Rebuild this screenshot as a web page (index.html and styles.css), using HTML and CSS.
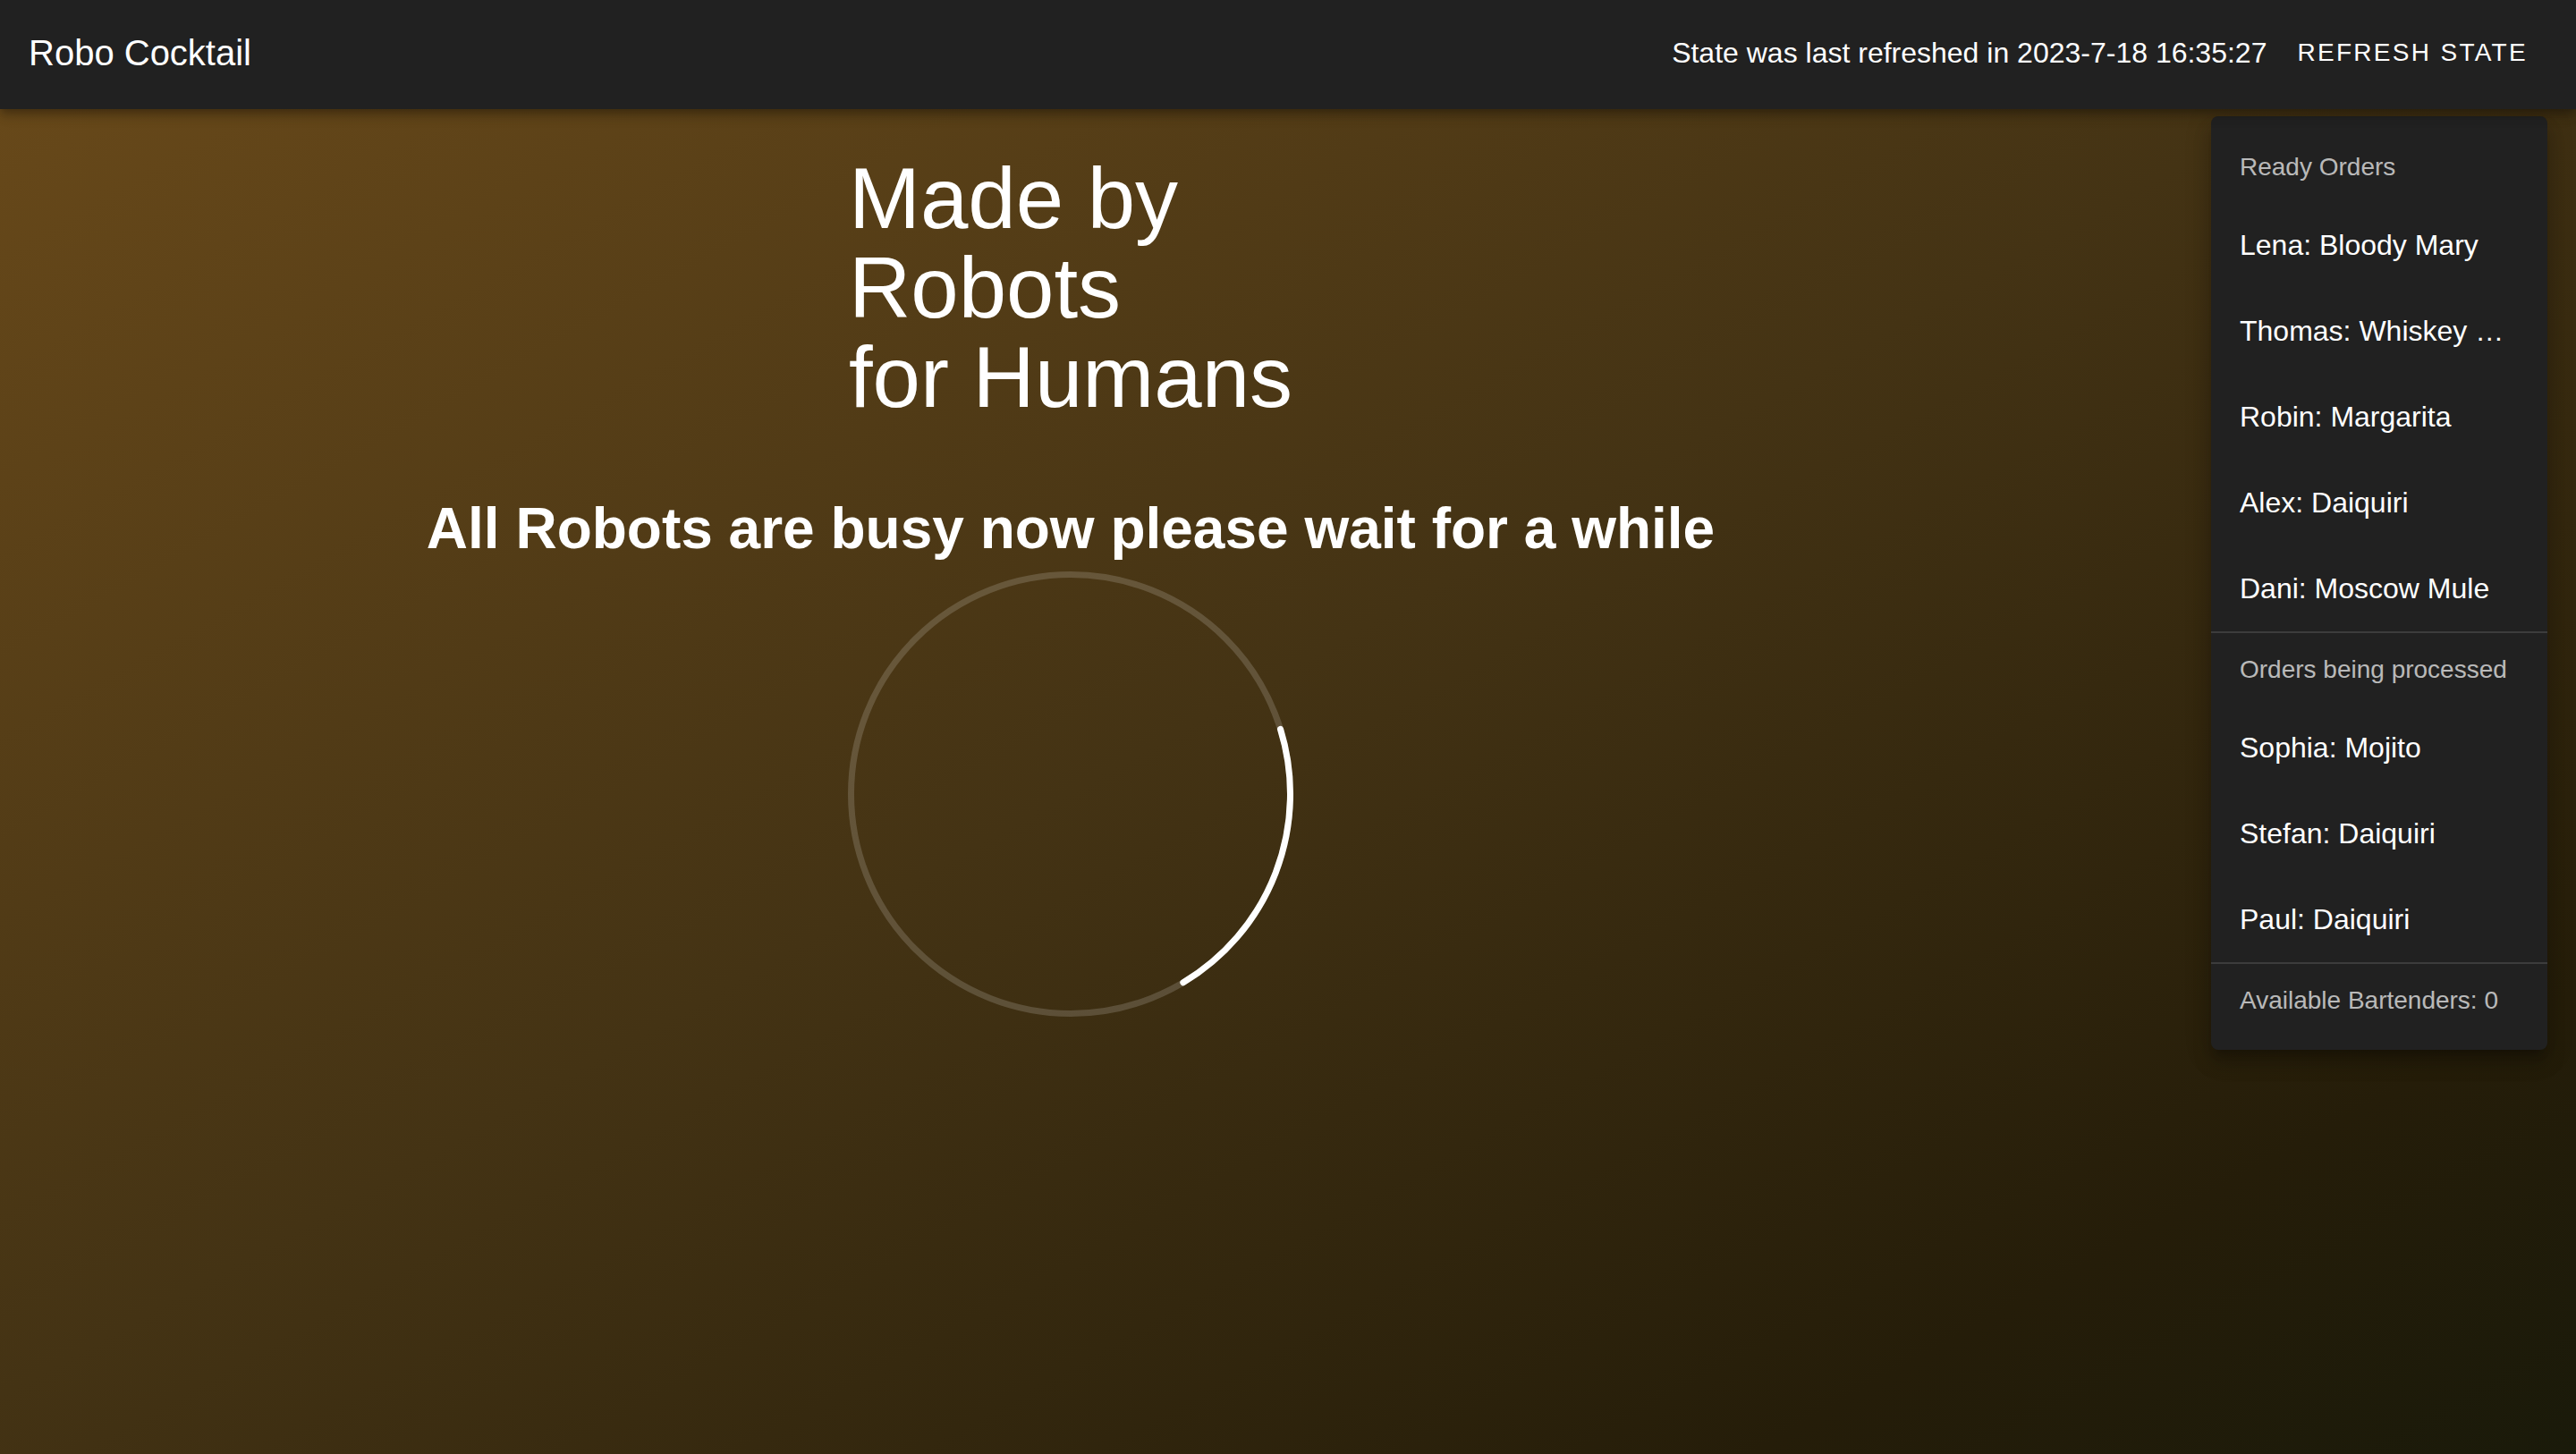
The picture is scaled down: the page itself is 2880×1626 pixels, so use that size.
FILE: index.html
```html
<!DOCTYPE html>
<html lang="en">
<head>
<meta charset="utf-8">
<title>Robo Cocktail</title>
<link rel="stylesheet" href="styles.css">
</head>
<body>
<div class="app">
  <header class="appbar">
    <div class="brand">Robo Cocktail</div>
    <div class="spacer"></div>
    <div class="refreshed">State was last refreshed in 2023-7-18 16:35:27</div>
    <button class="refresh-btn" type="button">Refresh State</button>
  </header>
  <div class="content">
    <main class="main">
      <h1 class="tagline">Made by<br>Robots<br>for Humans</h1>
      <h2 class="busy">All Robots are busy now please wait for a while</h2>
      <svg class="spinner" viewBox="0 0 498 498" width="498" height="498" aria-hidden="true">
        <circle class="spinner-track" cx="249" cy="249" r="245.5"></circle>
        <circle class="spinner-arc" cx="249" cy="249" r="245.5" transform="rotate(-17.2 249 249)"></circle>
      </svg>
    </main>
    <aside class="orders">
      <div class="subheader">Ready Orders</div>
      <ul class="list">
        <li class="item">Lena: Bloody Mary</li>
        <li class="item">Thomas: Whiskey Sour</li>
        <li class="item">Robin: Margarita</li>
        <li class="item">Alex: Daiquiri</li>
        <li class="item">Dani: Moscow Mule</li>
      </ul>
      <hr class="divider">
      <div class="subheader">Orders being processed</div>
      <ul class="list">
        <li class="item">Sophia: Mojito</li>
        <li class="item">Stefan: Daiquiri</li>
        <li class="item">Paul: Daiquiri</li>
      </ul>
      <hr class="divider">
      <div class="subheader">Available Bartenders: 0</div>
    </aside>
  </div>
</div>
</body>
</html>
```

FILE: styles.css
```css
* {
  box-sizing: border-box;
}

html, body {
  margin: 0;
  padding: 0;
  height: 100%;
}

body {
  font-family: "Liberation Sans", Arial, Helvetica, sans-serif;
  color: #ffffff;
  background: #1a1a0a;
  overflow: hidden;
}

.app {
  min-height: 100vh;
  display: flex;
  flex-direction: column;
  background: linear-gradient(to bottom right, #6a4a1a 0%, #443314 48%, #251d09 84%, #1a1a0a 100%);
}

.appbar {
  position: relative;
  z-index: 2;
  height: 122px;
  flex-shrink: 0;
  display: flex;
  align-items: center;
  padding: 0 38px 5px 32px;
  background: #212121;
  box-shadow: 0 4px 8px -2px rgba(0, 0, 0, 0.2), 0 8px 10px 0 rgba(0, 0, 0, 0.14), 0 2px 20px 0 rgba(0, 0, 0, 0.12);
}

.brand {
  font-size: 40px;
  line-height: 40px;
  font-weight: 400;
}

.spacer {
  flex: 1;
}

.refreshed {
  font-size: 32px;
  line-height: 32px;
  margin-right: 18px;
}

.refresh-btn {
  font-family: inherit;
  font-size: 28px;
  line-height: 28px;
  font-weight: 400;
  letter-spacing: 2.3px;
  text-transform: uppercase;
  color: #ffffff;
  background: none;
  border: none;
  padding: 0 16px;
  cursor: pointer;
}

.content {
  flex: 1;
  display: flex;
  align-items: flex-start;
}

.main {
  flex: 1;
  min-width: 0;
  display: flex;
  flex-direction: column;
  align-items: center;
}

.tagline {
  margin: 50px 0 0;
  font-size: 96px;
  line-height: 100px;
  font-weight: 400;
  text-align: left;
}

.busy {
  margin: 81px 0 0;
  font-size: 64px;
  line-height: 77px;
  font-weight: 700;
  white-space: nowrap;
}

.spinner {
  display: block;
  margin-top: 9px;
  width: 498px;
  height: 498px;
}

.spinner-track {
  fill: none;
  stroke: rgba(255, 255, 255, 0.16);
  stroke-width: 7;
}

.spinner-arc {
  fill: none;
  stroke: #ffffff;
  stroke-width: 7;
  stroke-linecap: round;
  stroke-dasharray: 327 2000;
}

.orders {
  flex-shrink: 0;
  width: 376px;
  margin: 8px 32px 0 78px;
  padding: 16px 0;
  background: #212121;
  border-radius: 8px;
  box-shadow: 0 10px 10px -6px rgba(0, 0, 0, 0.2), 0 16px 20px 2px rgba(0, 0, 0, 0.14), 0 6px 28px 4px rgba(0, 0, 0, 0.12);
}

.subheader {
  height: 80px;
  line-height: 82px;
  padding: 0 32px;
  font-size: 28px;
  color: rgba(255, 255, 255, 0.7);
  white-space: nowrap;
  overflow: hidden;
}

.list {
  list-style: none;
  margin: 0;
  padding: 0;
}

.item {
  height: 96px;
  line-height: 96px;
  padding: 0 32px;
  font-size: 32px;
  white-space: nowrap;
  overflow: hidden;
  text-overflow: ellipsis;
}

.divider {
  margin: 0;
  border: none;
  height: 2px;
  background: rgba(255, 255, 255, 0.12);
}
```
